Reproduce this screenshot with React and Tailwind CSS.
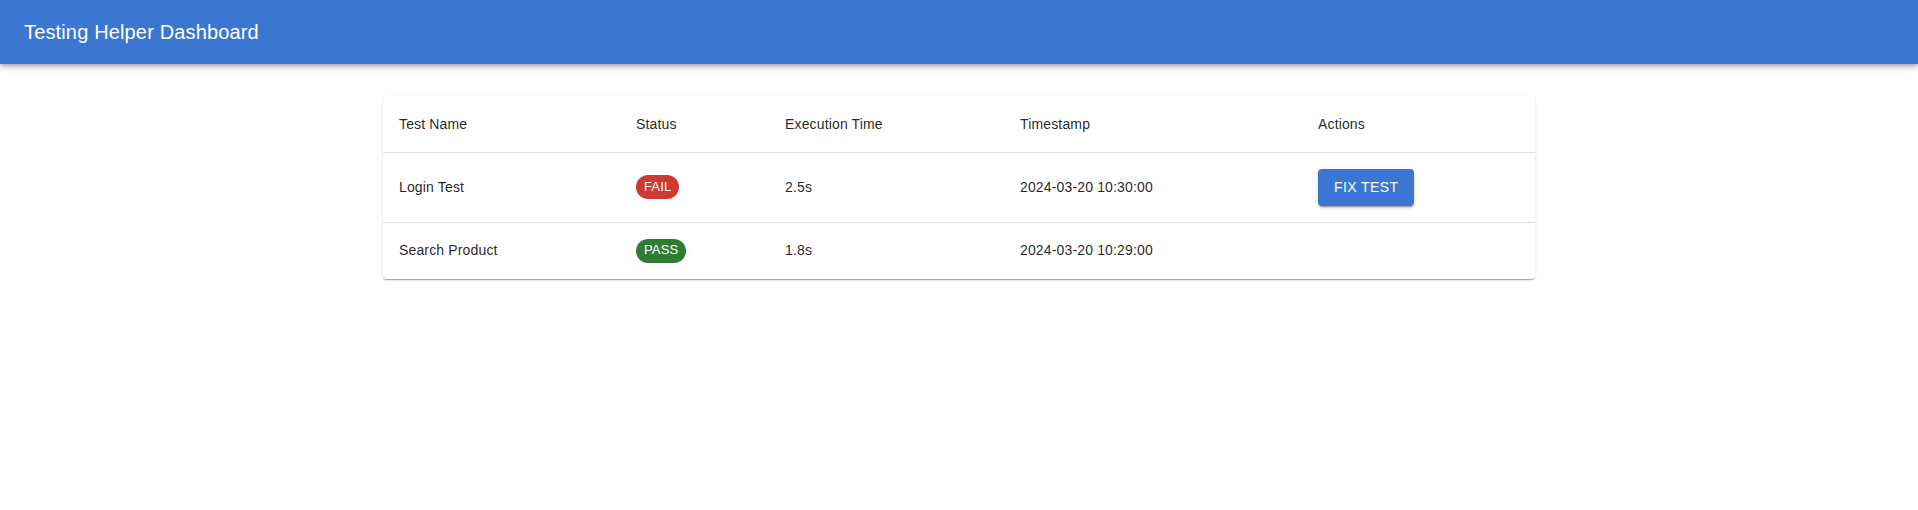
import React from 'react';

const tests = [
  { id: 1, name: 'Login Test', status: 'FAIL', time: '2.5s', timestamp: '2024-03-20 10:30:00' },
  { id: 2, name: 'Search Product', status: 'PASS', time: '1.8s', timestamp: '2024-03-20 10:29:00' },
];

const cell = 'p-4 text-left align-middle border-b border-[#e0e0e0]';

export default function App() {
  return (
    <div className="min-h-[510px] bg-white text-[rgba(0,0,0,0.87)] font-['Liberation_Sans',Arial,sans-serif]">
      <header className="h-16 flex items-center px-6 bg-[#3a76d2] text-white shadow-[0_2px_4px_-1px_rgba(0,0,0,0.2),0_4px_5px_0_rgba(0,0,0,0.14),0_1px_10px_0_rgba(0,0,0,0.12)]">
        <h1 className="text-[20px] leading-[1.6] font-medium tracking-[0.0075em]">Testing Helper Dashboard</h1>
      </header>

      <main className="max-w-[1200px] mx-auto px-6 mt-8">
        <div className="bg-white rounded overflow-hidden shadow-[0_2px_1px_-1px_rgba(0,0,0,0.2),0_1px_1px_0_rgba(0,0,0,0.14),0_1px_3px_0_rgba(0,0,0,0.12)]">
          <table className="w-full border-collapse text-[14px] leading-[1.5rem] tracking-[0.01071em]">
            <thead>
              <tr>
                <th className={`${cell} font-normal w-[237px]`}>Test Name</th>
                <th className={`${cell} font-normal w-[149px]`}>Status</th>
                <th className={`${cell} font-normal w-[235px]`}>Execution Time</th>
                <th className={`${cell} font-normal w-[298px]`}>Timestamp</th>
                <th className={`${cell} font-normal`}>Actions</th>
              </tr>
            </thead>
            <tbody>
              {tests.map((t, i) => (
                <tr key={t.id}>
                  <td className={`${cell} leading-[1.43] ${i === tests.length - 1 ? 'border-b-0' : ''}`}>{t.name}</td>
                  <td className={`${cell} leading-[1.43] ${i === tests.length - 1 ? 'border-b-0' : ''}`}>
                    <span
                      className={`inline-flex items-center h-6 px-2 rounded-full text-[13px] text-white ${
                        t.status === 'FAIL' ? 'bg-[#cd3a34]' : 'bg-[#2f7d32]'
                      }`}
                    >
                      {t.status}
                    </span>
                  </td>
                  <td className={`${cell} leading-[1.43] ${i === tests.length - 1 ? 'border-b-0' : ''}`}>{t.time}</td>
                  <td className={`${cell} leading-[1.43] ${i === tests.length - 1 ? 'border-b-0' : ''}`}>{t.timestamp}</td>
                  <td className={`${cell} leading-[1.43] ${i === tests.length - 1 ? 'border-b-0' : ''}`}>
                    {t.status === 'FAIL' && (
                      <button
                        type="button"
                        className="h-[36.5px] px-4 rounded bg-[#3a76d2] text-white text-[14px] font-medium uppercase tracking-[0.02857em] shadow-[0_3px_1px_-2px_rgba(0,0,0,0.2),0_2px_2px_0_rgba(0,0,0,0.14),0_1px_5px_0_rgba(0,0,0,0.12)]"
                      >
                        Fix Test
                      </button>
                    )}
                  </td>
                </tr>
              ))}
            </tbody>
          </table>
        </div>
      </main>
    </div>
  );
}
